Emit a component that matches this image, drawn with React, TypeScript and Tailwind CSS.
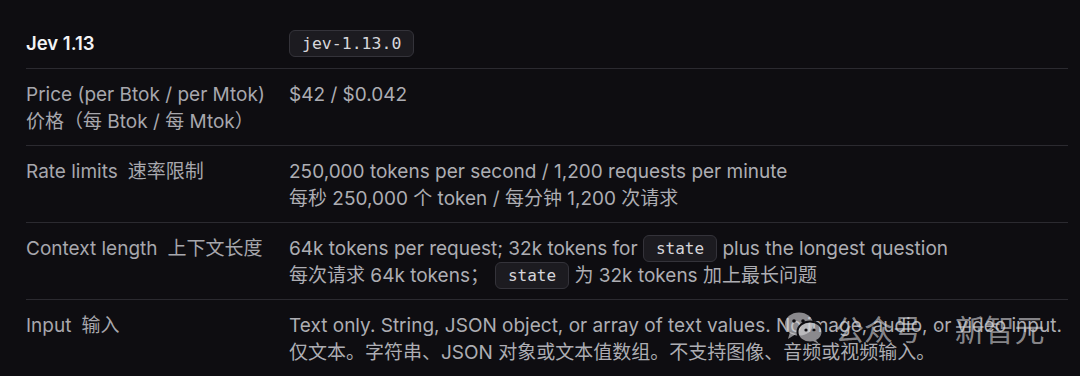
import React from "react";

const sans = "font-['Inter','Noto_Sans_CJK_SC',sans-serif]";

function Code({ children, wide }: { children: React.ReactNode; wide?: boolean }) {
  return (
    <span
      className={`inline-block h-[27px] align-top rounded-[6px] border border-[#34333a] bg-[#1c1b20] font-['DejaVu_Sans_Mono',monospace] leading-[25px] text-[#d6d6da] ${
        wide ? "px-[12px] text-[16.5px]" : "px-[12px] text-[16px]"
      }`}
    >
      {children}
    </span>
  );
}

function Row({ label, children }: { label: React.ReactNode; children: React.ReactNode }) {
  return (
    <div className="grid grid-cols-[263px_1fr] border-t border-[#2b2a30] pt-3 pb-2.5">
      <div className="leading-[27px] text-[#a7a7ad]">{label}</div>
      <div className="leading-[27px] text-[#adadb3] whitespace-nowrap">{children}</div>
    </div>
  );
}

function WeChatIcon() {
  return (
    <svg width="40" height="32" viewBox="0 0 40 32" fill="currentColor">
      <ellipse cx="15" cy="12" rx="14" ry="11.5" />
      <path d="M6 20 L4 27 L12 22 Z" />
      <ellipse cx="26" cy="20" rx="12.5" ry="10.5" stroke="#0e0d11" strokeWidth="2" />
      <path d="M32 28 L35 32 L29 29 Z" />
      <circle cx="10" cy="9" r="1.8" fill="#0e0d11" />
      <circle cx="19" cy="9" r="1.8" fill="#0e0d11" />
      <circle cx="22" cy="18" r="1.6" fill="#0e0d11" />
      <circle cx="30" cy="18" r="1.6" fill="#0e0d11" />
    </svg>
  );
}

export default function App() {
  return (
    <div className={`relative h-[376px] w-[1080px] overflow-hidden bg-[#0e0d11] ${sans} text-[19px]`}>
      <div className="ml-[26px] w-[1042px]">
        <div className="grid grid-cols-[263px_1fr] pt-[30px] pb-[11px]">
          <div className="text-[18.5px] font-semibold leading-[27px] text-[#f3f3f5]">Jev 1.13</div>
          <div className="leading-[27px]">
            <Code wide>jev-1.13.0</Code>
          </div>
        </div>

        <Row
          label={
            <>
              <div>Price (per Btok / per Mtok)</div>
              <div>价格（每 Btok / 每 Mtok）</div>
            </>
          }
        >
          <div>$42 / $0.042</div>
        </Row>

        <Row
          label={
            <>
              <span className="mr-2.5">Rate limits</span>速率限制
            </>
          }
        >
          <div>250,000 tokens per second / 1,200 requests per minute</div>
          <div>每秒 250,000 个 token / 每分钟 1,200 次请求</div>
        </Row>

        <Row
          label={
            <>
              <span className="mr-2.5">Context length</span>上下文长度
            </>
          }
        >
          <div>
            64k tokens per request; 32k tokens for <Code>state</Code> plus the longest question
          </div>
          <div>
            每次请求 64k tokens；<span className="ml-[6px]" />
            <Code>state</Code> 为 32k tokens 加上最长问题
          </div>
        </Row>

        <Row
          label={
            <>
              <span className="mr-2.5">Input</span>输入
            </>
          }
        >
          <div>Text only. String, JSON object, or array of text values. No image, audio, or video input.</div>
          <div>仅文本。字符串、JSON 对象或文本值数组。不支持图像、音频或视频输入。</div>
        </Row>
      </div>

      <div className="absolute left-[784px] top-[312px] flex items-center text-[rgba(215,215,218,0.62)]">
        <WeChatIcon />
        <span className="ml-[11px] font-['Noto_Sans_CJK_SC',sans-serif] text-[29px] leading-none">公众号</span>
        <span className="mx-[14px] text-[16px] leading-none">·</span>
        <span className="font-['Noto_Sans_CJK_SC',sans-serif] text-[30px] leading-none">新智元</span>
      </div>
    </div>
  );
}
